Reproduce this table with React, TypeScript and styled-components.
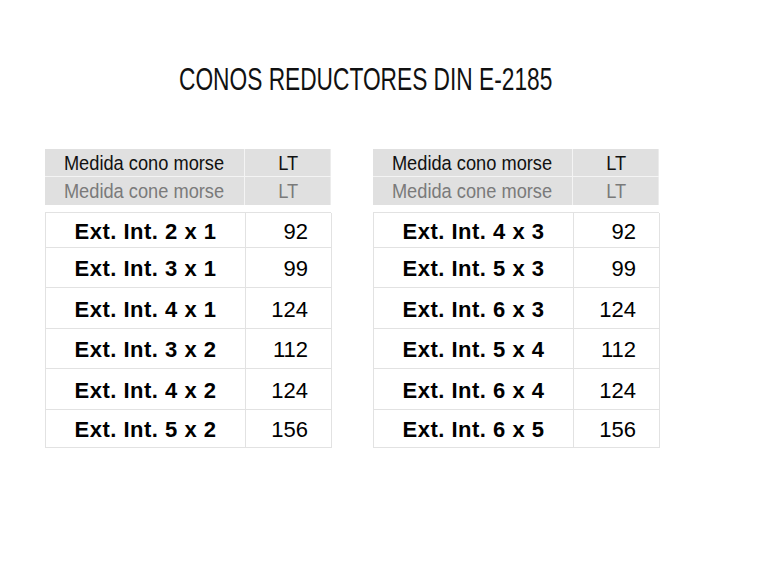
import React from "react";
import styled, { createGlobalStyle } from "styled-components";

const Global = createGlobalStyle`
  html, body { margin: 0; padding: 0; background: #ffffff; }
  body { font-family: "Liberation Sans", Arial, sans-serif; color: #111; }
`;

const Page = styled.div`
  width: 783px;
  height: 561px;
  box-sizing: border-box;
  padding: 64px 0 0 45px;
  display: flex;
  flex-direction: column;
`;

const Title = styled.h1`
  margin: 0 0 0 134px;
  font-family: "Liberation Sans", Arial, sans-serif;
  font-weight: 400;
  font-size: 30.5px;
  line-height: 30px;
  color: #111;
  white-space: nowrap;
`;

const Condensed = styled.span<{ $sx: number; $origin?: string }>`
  display: inline-block;
  white-space: nowrap;
  transform: scaleX(${(p) => p.$sx});
  transform-origin: ${(p) => p.$origin ?? "center"};
`;

const Tables = styled.div`
  display: flex;
  gap: 42px;
  margin-top: 55px;
`;

const Table = styled.div`
  display: flex;
  flex-direction: column;
  width: 286px;
`;

const Head = styled.div`
  display: grid;
  grid-template-columns: 200px 86px;
  background: #e0e0e0;
  border-right: 1px solid #ececec;
  margin-bottom: 7px;
`;

const HeadCell = styled.div<{ $muted?: boolean; $first?: boolean; $top?: boolean }>`
  height: 28px;
  display: flex;
  align-items: center;
  justify-content: center;
  font-family: "Liberation Sans", Arial, sans-serif;
  font-size: 20.5px;
  color: ${(p) => (p.$muted ? "#7a7a7a" : "#111")};
  border-right: ${(p) => (p.$first ? "1px solid #f4f4f4" : "none")};
  border-bottom: ${(p) => (p.$top ? "1px solid #f4f4f4" : "none")};
  box-sizing: border-box;
`;

const Body = styled.div`
  display: grid;
  grid-template-columns: 200px 86px;
  border-left: 1px solid #e2e2e2;
  border-top: 1px solid #e2e2e2;
  box-sizing: border-box;
`;

const NameCell = styled.div<{ $h: number }>`
  height: ${(p) => p.$h}px;
  box-sizing: border-box;
  border-right: 1px solid #e2e2e2;
  border-bottom: 1px solid #e2e2e2;
  display: flex;
  align-items: center;
  justify-content: center;
  padding-top: 3px;
  font-weight: 700;
  font-size: 22px;
  letter-spacing: 0.5px;
  color: #000;
`;

const ValueCell = styled.div<{ $h: number }>`
  height: ${(p) => p.$h}px;
  box-sizing: border-box;
  border-right: 1px solid #e2e2e2;
  border-bottom: 1px solid #e2e2e2;
  display: flex;
  align-items: center;
  justify-content: flex-end;
  padding: 3px 23px 0 0;
  font-size: 22px;
  color: #000;
`;

type Row = [string, number];

const left: Row[] = [
  ["Ext. Int. 2 x 1", 92],
  ["Ext. Int. 3 x 1", 99],
  ["Ext. Int. 4 x 1", 124],
  ["Ext. Int. 3 x 2", 112],
  ["Ext. Int. 4 x 2", 124],
  ["Ext. Int. 5 x 2", 156],
];

const right: Row[] = [
  ["Ext. Int. 4 x 3", 92],
  ["Ext. Int. 5 x 3", 99],
  ["Ext. Int. 6 x 3", 124],
  ["Ext. Int. 5 x 4", 112],
  ["Ext. Int. 6 x 4", 124],
  ["Ext. Int. 6 x 5", 156],
];

const heights = [35, 40, 41, 40, 41, 38];

function DataTable({ rows }: { rows: Row[] }) {
  return (
    <Table>
      <Head>
        <HeadCell $first $top>
          <Condensed $sx={0.89}>Medida cono morse</Condensed>
        </HeadCell>
        <HeadCell $top>
          <Condensed $sx={0.89}>LT</Condensed>
        </HeadCell>
        <HeadCell $first $muted>
          <Condensed $sx={0.89}>Medida cone morse</Condensed>
        </HeadCell>
        <HeadCell $muted>
          <Condensed $sx={0.89}>LT</Condensed>
        </HeadCell>
      </Head>
      <Body>
        {rows.map(([name, v], i) => (
          <React.Fragment key={name}>
            <NameCell $h={heights[i]}>{name}</NameCell>
            <ValueCell $h={heights[i]}>{v}</ValueCell>
          </React.Fragment>
        ))}
      </Body>
    </Table>
  );
}

export default function App() {
  return (
    <>
      <Global />
      <Page>
        <Title>
          <Condensed $sx={0.745} $origin="left">CONOS REDUCTORES DIN E-2185</Condensed>
        </Title>
        <Tables>
          <DataTable rows={left} />
          <DataTable rows={right} />
        </Tables>
      </Page>
    </>
  );
}
